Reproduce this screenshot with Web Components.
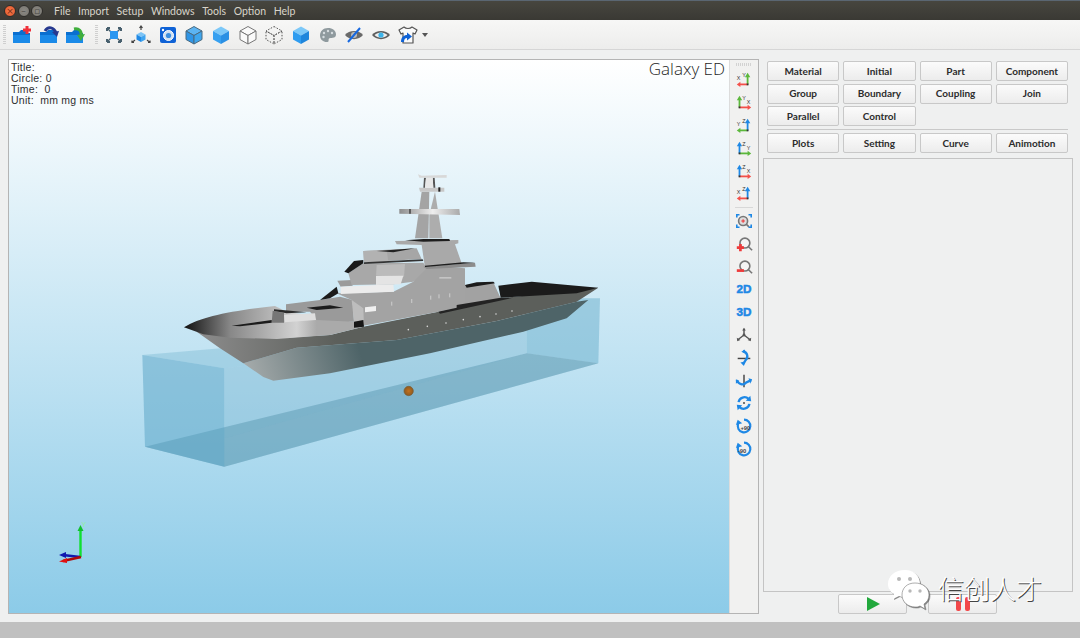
<!DOCTYPE html>
<html>
<head>
<meta charset="utf-8">
<style>
html, body { margin: 0; height: 638px; overflow: hidden; background: #eff0f0; }
</style>
</head>
<body>
<app-window>
    <title-bar></title-bar>
    <main-toolbar></main-toolbar>
    <work-area>
        <view-frame>
            <ship-view></ship-view>
            <side-toolbar></side-toolbar>
        </view-frame>
        <side-panel></side-panel>
    </work-area>
    <water-mark></water-mark>
</app-window>
<script>
// icon helpers, all drawn in a 20x20 box
const svg = (inner, size = 20) => `<svg width="${size}" height="${size}" viewBox="0 0 20 20">${inner}</svg>`

const folder = extra => svg(`
    <path d="M1 7 h6 l2 -2 h6 v3 h3 v10 H1z" fill="#0a6fd0"/>
    <path d="M1 10 h17 v8 H1z" fill="#1a8ae8"/>${extra}`)

const cube = (top, left, right, line, dash) => svg(`
    <g stroke="${line}" stroke-width="${line === 'none' ? 0 : 1}" stroke-linejoin="round" ${dash ? 'stroke-dasharray="1.5 1.5"' : ''}>
    <path d="M10 1.5 L18 6 L10 10.5 L2 6z" fill="${top}"/>
    <path d="M2 6 L10 10.5 V19 L2 14.5z" fill="${left}"/>
    <path d="M18 6 L10 10.5 V19 L18 14.5z" fill="${right}"/></g>`)

const vArrow = (x, col) => `<path d="M${x} 16 V7" stroke="${col}" stroke-width="2"/><path d="M${x - 3} 8 L${x} 3 L${x + 3} 8z" fill="${col}"/>`
const hArrow = (x1, x2, col) => {
    const d = x2 > x1 ? 1 : -1
    return `<path d="M${x1} 16 H${x2 - d * 3}" stroke="${col}" stroke-width="2"/><path d="M${x2 - d * 4} 13 L${x2} 16 L${x2 - d * 4} 19z" fill="${col}"/>`
}
const tiny = (x, y, t) => `<text x="${x}" y="${y}" font-family="Liberation Sans, sans-serif" font-size="6" fill="#333">${t}</text>`
const RED = '#f4504a', GREEN = '#5cb83c', BLUE = '#1e88e5'
// upright arrow on the right, flat one pointing left
const axisR = (vc, vl, hc, hl) => svg(vArrow(14, vc) + hArrow(14, 2, hc) + tiny(8, 8, vl) + tiny(2, 11, hl) + '<rect x="13" y="15" width="2" height="2" fill="#333"/>')
// upright arrow on the left, flat one pointing right
const axisL = (vc, vl, hc, hl) => svg(vArrow(5, vc) + hArrow(5, 18, hc) + tiny(8, 8, vl) + tiny(13, 12, hl) + '<rect x="4" y="15" width="2" height="2" fill="#333"/>')

const lens = (cx = 11, cy = 9) => `<circle cx="${cx}" cy="${cy}" r="5.5" fill="#f4f4f4" stroke="#777" stroke-width="1.8"/><path d="M${cx + 4} ${cy + 4} l4 4" stroke="#777" stroke-width="1.8"/>`
const spin = `<path d="M10 3 a7 7 0 1 1 -6.5 4.5" fill="none" stroke="${BLUE}" stroke-width="2.4"/><path d="M1 9 L3 3 L8 7z" fill="${BLUE}"/>`

const toolIcons = [
    svg(`<path d="M3 3 h3 M3 3 v3 M17 3 h-3 M17 3 v3 M3 17 h3 M3 17 v-3 M17 17 h-3 M17 17 v-3" stroke="#48606e" stroke-width="2" fill="none"/><path d="M3.5 3.5 l3 3 M16.5 3.5 l-3 3 M3.5 16.5 l3 -3 M16.5 16.5 l-3 -3" stroke="#48606e" stroke-width="1.4"/><rect x="6" y="6" width="8" height="8" fill="#2a96f0"/>`),
    svg(`<path d="M10 7 L14.5 9.5 L10 12 L5.5 9.5z" fill="#7cc4f6"/><path d="M5.5 9.5 L10 12 V17 L5.5 14.5z" fill="#1e88e5"/><path d="M14.5 9.5 L10 12 V17 L14.5 14.5z" fill="#3fa4f0"/><path d="M10 5 V1.5 M8.5 3 L10 1 L11.5 3" stroke="#444" stroke-width="1.2" fill="none"/><path d="M4 15 L1 17.5 M1 15.5 V17.5 H3 M16 15 L19 17.5 M19 15.5 V17.5 H17" stroke="#444" stroke-width="1.2" fill="none"/>`),
    svg(`<rect x="2" y="2" width="16" height="16" rx="2" fill="#0f62d6"/><circle cx="10.5" cy="10.5" r="5" fill="#cfe0f2" stroke="#fff" stroke-width="1"/><circle cx="10.5" cy="10.5" r="2.6" fill="#3d8fe0"/><circle cx="5" cy="5" r="1.2" fill="#fff"/>`),
    cube('#5cb4f2', '#2f95e6', '#3ea6ee', '#4a6a80'),
    cube('#7cc8f8', '#36a0f0', '#2a90e4', 'none'),
    cube('#fafafa', '#fafafa', '#fafafa', '#777'),
    cube('none', 'none', 'none', '#555', true),
    cube('#7cc8f8', '#2e9cf0', '#1f86dc', 'none'),
    svg(`<path d="M10 3 C5 3 2 6.5 2 10.5 C2 15 6 17.5 9.5 17 C11.5 16.5 10 14.5 11 13.5 C12 12.5 18 14 18 9.5 C18 5.5 14.5 3 10 3z" fill="#8f9a9e"/><circle cx="6" cy="8" r="1.2" fill="#d5dcdf"/><circle cx="10" cy="6" r="1.2" fill="#d5dcdf"/><circle cx="14" cy="8" r="1.2" fill="#d5dcdf"/><circle cx="5.5" cy="12" r="1.2" fill="#d5dcdf"/>`),
    svg(`<path d="M1 10 C5 4.5 15 4.5 19 10 C15 15.5 5 15.5 1 10z" fill="#6a6a6a"/><circle cx="10" cy="10" r="3" fill="#bbb"/><path d="M4 17 L16 3" stroke="#1668e0" stroke-width="2"/>`),
    svg(`<path d="M1 10 C5 4.5 15 4.5 19 10 C15 15.5 5 15.5 1 10z" fill="#5e5e5e"/><path d="M3.5 10 C7 6.5 13 6.5 16.5 10 C13 13.5 7 13.5 3.5 10z" fill="#eee"/><circle cx="10" cy="10" r="2.6" fill="#3cb4ea"/>`),
    svg(`<path d="M6 2 C8 4 12 4 14 2 L19 5 L17 9 L15 8 V18 H5 V8 L3 9 L1 5z" fill="#fafafa" stroke="#555" stroke-width="1.2" stroke-linejoin="round"/><path d="M3 17 C3 12 6 10 9 10 V7.5 L14 11.5 L9 15.5 V13 C7 13 6 14.5 6 17z" fill="#0f62d6"/>`)
]

const sideIcons = [
    axisR(GREEN, 'Y', RED, 'X'), axisL(GREEN, 'Y', RED, 'X'), axisR(BLUE, 'Z', GREEN, 'Y'),
    axisL(BLUE, 'Z', GREEN, 'Y'), axisL(BLUE, 'Z', RED, 'X'), axisR(BLUE, 'Z', RED, 'X'),
    null,
    svg(`<circle cx="9" cy="10" r="5" fill="#ddd" stroke="#777" stroke-width="1.8"/><path d="M7 10 h4 M9 8 v4" stroke="#e33" stroke-width="1.2"/><path d="M12.5 13.5 l3 3" stroke="#777" stroke-width="1.8"/><path d="M2 6 V3 H5 M15 3 h3 v3 M2 14 v3 h3 M15 17 h3 v-3" stroke="${BLUE}" stroke-width="1.8" fill="none"/>`),
    svg(lens() + `<path d="M2 14 h8 M6 10 v8" stroke="#ee3b3b" stroke-width="3"/>`),
    svg(lens() + `<path d="M2 14 h8" stroke="#ee3b3b" stroke-width="3"/>`),
    svg(`<text x="10" y="14.5" text-anchor="middle" font-family="Liberation Sans, sans-serif" font-weight="700" font-size="13" fill="${BLUE}" stroke="${BLUE}" stroke-width=".6">2D</text>`),
    svg(`<text x="10" y="14.5" text-anchor="middle" font-family="Liberation Sans, sans-serif" font-weight="700" font-size="13" fill="${BLUE}" stroke="${BLUE}" stroke-width=".6">3D</text>`),
    svg(`<path d="M10 3 V10 L3.5 15 M10 10 L16.5 15" stroke="#555" stroke-width="1.6" fill="none"/><path d="M8 5 L10 2 L12 5z M2 13 L2.5 17 L6 15.5z M18 13 L17.5 17 L14 15.5z" fill="#555"/><circle cx="10" cy="10" r="1.6" fill="#555"/>`),
    svg(`<path d="M3 10.5 H17" stroke="#444" stroke-width="1.6"/><path d="M9 2 C14 4 15 9 12 12 C11 14 10 15 9 17" fill="none" stroke="${BLUE}" stroke-width="2.6"/><path d="M6 15 L10 19 L11 14z M7 3 L11 0.5 L11 5z" fill="${BLUE}"/>`),
    svg(`<path d="M10 3 V17" stroke="#444" stroke-width="1.6"/><path d="M2 9 C4 14 9 15 12 12 C14 11 16 10 18 9" fill="none" stroke="${BLUE}" stroke-width="2.6"/><path d="M1 13 L1 8 L5 10z M15 7 L19 8 L17 13z" fill="${BLUE}"/>`),
    svg(`<path d="M4 9 A6.5 6.5 0 0 1 15 5.5" fill="none" stroke="${BLUE}" stroke-width="2.6"/><path d="M16 11 A6.5 6.5 0 0 1 5 14.5" fill="none" stroke="${BLUE}" stroke-width="2.6"/><path d="M12 7.5 L18 8 L17 2z M8 12.5 L2 12 L3 18z" fill="${BLUE}"/><circle cx="10" cy="10" r="1.2" fill="#555"/>`),
    svg(spin + `<text x="6" y="14.5" font-family="Liberation Sans, sans-serif" font-weight="700" font-size="6.5" fill="#444">+90</text>`),
    svg(spin + `<text x="3" y="14.5" font-family="Liberation Sans, sans-serif" font-weight="700" font-size="6.5" fill="#444">-90</text>`)
]

// a custom element from plain markup
const define = (name, markup) => customElements.define(name, class extends HTMLElement {
    constructor() {
        super()
        this.attachShadow({ mode: 'open' }).innerHTML = markup
    }
})

define('app-window', `<style>
    :host { display: flex; flex-direction: column; height: 638px; position: relative; background: #eff0f0; }
    ::slotted(work-area) { flex: 1; }
    #foot { height: 16px; background: #c0c0c0; }
</style><slot></slot><div id="foot"></div>`)

define('title-bar', `<style>
    :host { display: flex; align-items: center; height: 19px; flex: none; border-top: 1px solid #5a6672; background: linear-gradient(#47463f, #3a3934); }
    .dots { display: flex; gap: 1.5px; padding-left: 4px; width: 54px; box-sizing: border-box; }
    .dot { width: 10px; height: 10px; flex: none; border-radius: 50%; background: radial-gradient(#8c8a84, #77756f); border: 1px solid #2e2d2a; font: 9px/10px "DejaVu Sans", sans-serif; text-align: center; color: #4a4945; }
    .dot.close { background: radial-gradient(#f47a4e, #e2572a); color: #7a2a10; }
    nav { display: flex; gap: 7.6px; font: 10.5px "Lato", sans-serif; color: #d8d4ca; }
</style>
<div class="dots"><div class="dot close">×</div><div class="dot">–</div><div class="dot">▫</div></div>
<nav><span>File</span><span>Import</span><span>Setup</span><span>Windows</span><span>Tools</span><span>Option</span><span>Help</span></nav>`)

define('main-toolbar', `<style>
    :host { display: flex; align-items: center; height: 29px; flex: none; padding-left: 3px; border-bottom: 1px solid #d6d6d6; background: linear-gradient(#f7f7f6, #ededec); }
    .handle { width: 3px; height: 20px; margin-right: 2.7px; flex: none; background: repeating-linear-gradient(#cfcfcf 0 1px, transparent 1px 2px); }
    .handle.mid { margin-left: 6.5px; }
    .cell { width: 26.7px; flex: none; display: flex; justify-content: center; }
    svg { display: block; }
    .drop { width: 0; height: 0; margin-left: 1px; border: 3px solid transparent; border-top: 4px solid #555; border-bottom: 0; }
</style>
<div class="handle"></div>
<div class="cell">${folder(`<path d="M11 5 h8 M15 1 v8" stroke="#f0303a" stroke-width="3"/>`)}</div>
<div class="cell">${folder(`<path d="M6 6 C9 1 15 2 17 8" fill="none" stroke="#27398f" stroke-width="3"/><path d="M13 7 L20 6 L18 12z" fill="#27398f"/>`)}</div>
<div class="cell">${folder(`<path d="M9 4 C14 3 17 6 16 11" fill="none" stroke="#3fae3c" stroke-width="3"/><path d="M12 10 L20 9 L16 16z" fill="#3fae3c"/>`)}</div>
<div class="handle mid"></div>
${toolIcons.map(i => `<div class="cell">${i}</div>`).join('')}
<div class="drop"></div>`)

define('work-area', `<style>
    :host { display: flex; align-items: stretch; padding: 9px 7px 8px 8px; min-height: 0; }
</style><slot></slot>`)

define('view-frame', `<style>
    :host { display: flex; width: 751px; flex: none; box-sizing: border-box; border: 1px solid #b4b4b4; }
</style><slot></slot>`)

// everything in the ship group uses a 3x coordinate system of the model area
define('ship-view', `<style>
    :host { display: block; width: 720px; flex: none; position: relative; background: linear-gradient(#ffffff, #8ccbe8); font: 10.5px/11px "Liberation Sans", sans-serif; letter-spacing: .25px; color: #2e2e2e; }
    svg { display: block; }
    #info { position: absolute; left: 2px; top: 2px; }
    #brand { position: absolute; right: 4px; top: 0; font: 300 17px/18px "Open Sans", sans-serif; letter-spacing: 0; color: #1e1e1e; }
</style>
<svg width="720" height="553" viewBox="9 60 720 553">
    <defs>
        <linearGradient id="bow" x1="162" x2="560" y1="0" y2="0" gradientUnits="userSpaceOnUse">
            <stop offset="0" stop-color="#111"/><stop offset=".35" stop-color="#888"/><stop offset=".85" stop-color="#d2d2d2"/><stop offset="1" stop-color="#aaa"/>
        </linearGradient>
        <linearGradient id="band" x1="220" x2="620" y1="0" y2="0" gradientUnits="userSpaceOnUse">
            <stop offset="0" stop-color="#8a8a8a"/><stop offset="1" stop-color="#5c5f5b"/>
        </linearGradient>
        <linearGradient id="low" x1="340" x2="680" y1="640" y2="530" gradientUnits="userSpaceOnUse">
            <stop offset="0" stop-color="#a9aeae"/><stop offset="1" stop-color="#4e6468"/>
        </linearGradient>
        <linearGradient id="bar" x1="808" x2="990" y1="0" y2="0" gradientUnits="userSpaceOnUse">
            <stop offset="0" stop-color="#8e8e8e"/><stop offset=".55" stop-color="#eee"/><stop offset="1" stop-color="#aaa"/>
        </linearGradient>
        <radialGradient id="ball"><stop offset="0" stop-color="#c4701c"/><stop offset="1" stop-color="#8c5a20"/></radialGradient>
    </defs>
    <g transform="translate(130 165) scale(.33333)">
        <!-- water box, back faces -->
        <path d="M37 570 L283 610 L1190 500 L1190 470z" fill="#5fa8c8" fill-opacity=".3"/>
        <path d="M1190 400 L1410 400 L1405 595 L1190 565z" fill="#5fa8c8" fill-opacity=".45"/>
        <path d="M45 845 L283 905 L1405 595 L1190 565z" fill="#3f7f95" fill-opacity=".42"/>
        <!-- water box, front left face -->
        <path d="M37 570 L283 610 L283 905 L45 845z" fill="#5fa8c8" fill-opacity=".55"/>
        <path d="M283 610 L1190 500 L1190 565 L283 820z" fill="#6fb0cc" fill-opacity=".35"/>
        <path d="M283 820 L1190 565 L1405 595 L283 905z" fill="#6fb0cc" fill-opacity=".2"/>
        <!-- hull -->
        <path d="M340 595 L500 548 L800 525 L1100 468 L1340 410 L1375 405 L1310 460 L1180 500 L900 565 L600 625 L430 647 L400 636z" fill="url(#low)"/>
        <path d="M200 500 L300 515 L440 520 L600 510 L700 485 L925 440 L980 430 L1110 400 L1405 368 L1340 410 L1100 468 L800 525 L500 548 L340 595 L270 550z" fill="url(#band)"/>
        <path d="M162 487 C215 455 300 438 435 423 L470 440 L670 470 L700 485 L600 510 L440 522 L300 518 L220 508z" fill="url(#bow)"/>
        <!-- deck gear forward -->
        <path d="M468 418 L570 405 L630 395 L668 405 L672 470 L560 465 L540 440 L468 440z" fill="#9a9a9a"/>
        <path d="M530 428 L600 421 L640 428 L560 435z" fill="#1c1c1c"/>
        <path d="M428 437 L462 444 L462 473 L425 473z" fill="#767676"/>
        <path d="M462 450 L555 445 L558 465 L465 472z" fill="#dedede"/>
        <path d="M305 482 L425 465 L425 473 L330 484z" fill="#1c1c1c"/>
        <path d="M432 433 L530 442 L470 445 L432 438z" fill="#2a2a2a"/>
        <!-- main block -->
        <path d="M620 385 L790 380 L850 350 L880 300 L1005 310 L1005 420 L980 430 L925 440 L700 482 L665 405z" fill="#a3a3a3"/>
        <path d="M665 405 L700 430 L702 482 L672 470z" fill="#bdbdbd"/>
        <path d="M570 405 L620 365 L625 385 L600 400z" fill="#1b1b1b"/>
        <path d="M622 347 L665 345 L668 362 L632 365z" fill="#9b9b9b"/>
        <path d="M632 365 L790 358 L792 380 L632 387z" fill="#ececec"/>
        <path d="M705 427 L738 423 L738 438 L705 442z" fill="#f0f0f0"/>
        <path d="M672 470 L700 465 L702 485 L672 488z" fill="#161616"/>
        <!-- bridge -->
        <path d="M655 325 L700 295 L880 293 L890 310 L850 350 L790 358 L665 360z" fill="#a8a8a8"/>
        <path d="M740 300 L825 297 L822 335 L738 332z" fill="#bbb"/>
        <path d="M738 333 L820 332 L812 358 L738 360z" fill="#e4e4e4"/>
        <path d="M643 320 L672 288 L700 285 L700 295 L655 325z" fill="#1a1a1a"/>
        <path d="M700 258 L860 250 L875 282 L702 292z" fill="#a6a6a6"/>
        <path d="M700 258 L770 255 L775 290 L702 292z" fill="#b2b2b2"/>
        <path d="M740 258 L855 250 L790 262z" fill="#222"/>
        <path d="M702 292 L878 283 L880 288 L702 297z" fill="#333"/>
        <!-- tower -->
        <path d="M795 228 L985 225 L985 235 L975 238 L995 295 L885 308 L875 240 L800 238z" fill="#a9a9a9"/>
        <path d="M825 226 L880 222 L958 222 L960 228 L880 230z" fill="#1e1e1e"/>
        <path d="M880 305 L1035 293 L1037 305 L890 312z" fill="#8c8c8c"/>
        <path d="M885 306 L1000 296 L1035 293 L1000 292 L885 302z" fill="#1e1e1e"/>
        <!-- aft cabin and stern deck -->
        <path d="M1005 360 L1090 352 L1110 395 L1112 400 L980 430 L1005 415z" fill="#a2a2a2"/>
        <path d="M1005 360 L1040 352 L1090 350 L1095 355 L1010 368z" fill="#1b1b1b"/>
        <path d="M1105 362 L1205 350 L1405 368 L1340 385 L1112 398z" fill="#1b1b1b"/>
        <path d="M925 440 L980 428 L980 420 L1112 398 L1150 398 L930 446z" fill="#232323"/>
        <!-- mast -->
        <path d="M855 220 L875 80 L898 80 L895 220z" fill="#a4a4a4"/>
        <path d="M898 220 L898 150 L915 80 L937 220z" fill="#adadad"/>
        <path d="M808 132 L988 132 L990 150 L808 146z" fill="url(#bar)"/>
        <path d="M838 132 h4 v14 h-4z" fill="#333"/>
        <path d="M867 68 H943 V80 H870z" fill="#c8c8c8"/>
        <path d="M882 38 H888 L885 68 H880z M908 38 H914 L916 68 H910z" fill="#555"/>
        <path d="M888 38 H908 L910 68 H885z" fill="#e8e8e8"/>
        <path d="M925 67 h6 v13 h-6z" fill="#222"/>
        <path d="M864 28 L875 32 L950 30 L950 38 L868 38z" fill="#d8d8d8"/>
        <!-- ports -->
        <g fill="#d8d8d8">
            <circle cx="835" cy="494" r="2.4"/><circle cx="892" cy="484" r="2.4"/><circle cx="948" cy="474" r="2.4"/><circle cx="1000" cy="464" r="2.4"/><circle cx="1050" cy="455" r="2.4"/><circle cx="1098" cy="447" r="2.4"/><circle cx="1146" cy="438" r="2.4"/>
        </g>
        <g fill="#c4c4c4">
            <rect x="783" y="410" width="4" height="12"/><rect x="843" y="402" width="4" height="12"/><rect x="900" y="392" width="4" height="12"/><rect x="925" y="388" width="4" height="12"/><rect x="957" y="385" width="4" height="12"/><rect x="928" y="336" width="36" height="5"/>
        </g>
        <circle cx="836" cy="678" r="14" fill="url(#ball)" stroke="#7a5a34" stroke-width="2"/>
    </g>
    <!-- axis triad -->
    <path d="M80.5 557 V530" stroke="#10e030" stroke-width="2.4"/>
    <path d="M77.5 531 L80.5 525 L83.5 531z" fill="#10c030"/>
    <text x="81.5" y="527" font-family="Liberation Sans, sans-serif" font-size="7" fill="#8ff0a0">Y</text>
    <path d="M80 557 L63 555" stroke="#1018b0" stroke-width="2.4"/>
    <path d="M66 552 L59 555 L66 558z" fill="#1018b0"/>
    <path d="M81 557 L63 561" stroke="#b00808" stroke-width="2.6"/>
    <path d="M67 558 L59 561.5 L67 563z" fill="#e01010"/>
</svg>
<div id="info"><div>Title:</div><div>Circle: 0</div><div>Time:&nbsp; 0</div><div>Unit:&nbsp; mm mg ms</div></div>
<div id="brand">Galaxy ED</div>`)

define('side-toolbar', `<style>
    :host { display: flex; flex-direction: column; align-items: center; flex: 1; background: #f1f1f0; border-left: 1px solid #dcdcdc; padding-top: 3px; box-sizing: border-box; }
    .handle { width: 16px; height: 3px; margin-bottom: 2px; background: repeating-linear-gradient(90deg, #d2d2d2 0 1px, transparent 1px 2px); }
    .cell { height: 22.8px; display: flex; align-items: center; }
    .rule { width: 18px; height: 1px; margin: 2px 0 1.8px; background: #d8d8d8; }
    svg { display: block; width: 18px; height: 18px; }
</style>
<div class="handle"></div>
${sideIcons.map(i => i ? `<div class="cell">${i}</div>` : '<div class="rule"></div>').join('')}`)

define('ui-button', `<style>
    :host { display: flex; align-items: center; justify-content: center; height: 20px; box-sizing: border-box; border: 1px solid #c8c8c8; border-radius: 2px; background: linear-gradient(#fbfbfb, #ececec); font: 700 10px/16px "Lato", sans-serif; padding-bottom: 1px; color: #2c2c2c; }
</style><slot></slot>`)

define('side-panel', `<style>
    :host { display: flex; flex-direction: column; flex: 1; margin-left: 4px; padding-top: 2px; min-width: 0; }
    .grid { display: grid; grid-template-columns: repeat(4, 1fr); gap: 2.6px 4px; padding: 0 5px 0 4px; }
    .rule { height: 1px; margin: 3px 5px 3px 4px; background: #c9c9c9; }
    .box { flex: 1; margin-top: 5px; border: 1px solid #c4c4c4; background: #eff0f0; }
    .run { display: flex; gap: 21px; padding: 2px 0 0 75px; }
    .run ui-button { width: 69px; }
</style>
<div class="grid">
    <ui-button>Material</ui-button><ui-button>Initial</ui-button><ui-button>Part</ui-button><ui-button>Component</ui-button>
    <ui-button>Group</ui-button><ui-button>Boundary</ui-button><ui-button>Coupling</ui-button><ui-button>Join</ui-button>
    <ui-button>Parallel</ui-button><ui-button>Control</ui-button>
</div>
<div class="rule"></div>
<div class="grid">
    <ui-button>Plots</ui-button><ui-button>Setting</ui-button><ui-button>Curve</ui-button><ui-button>Animotion</ui-button>
</div>
<div class="box"></div>
<div class="run">
    <ui-button><svg width="14" height="14" viewBox="0 0 14 14"><path d="M1 0 L14 7 L1 14z" fill="#22a83c"/></svg></ui-button>
    <ui-button><svg width="16" height="14" viewBox="0 0 16 14"><rect x="1" y="0" width="5" height="14" rx="2" fill="#f2484a"/><rect x="10" y="0" width="5" height="14" rx="2" fill="#f2484a"/></svg></ui-button>
</div>`)

define('water-mark', `<style>
    :host { position: absolute; left: 886px; top: 568px; display: flex; align-items: flex-start; gap: 6px; }
    svg { display: block; filter: drop-shadow(1px 1px 0 rgba(60,60,60,.6)); }
    span { font: 300 26px/30px "Noto Sans CJK SC", sans-serif; color: #fff; text-shadow: 1px 1px 0 #444; margin-top: 5px; }
</style>
<svg width="46" height="46" viewBox="0 0 46 46">
    <path d="M19 2 C9 2 2 8 2 16 C2 20 4 24 8 26 L7 31 L13 28 C15 29 17 29 19 29 C29 29 34 23 34 16 C34 8 28 2 19 2z" fill="#fff"/>
    <circle cx="13" cy="11" r="2" fill="#b8b8b8"/><circle cx="24" cy="11" r="2" fill="#b8b8b8"/>
    <path d="M29 15 C21 15 16 20 16 27 C16 34 22 39 29 39 C31 39 32 39 34 38 L39 41 L38 36 C41 34 43 31 43 27 C43 20 37 15 29 15z" fill="#fff" stroke="#777" stroke-width=".6"/>
    <circle cx="24" cy="23" r="1.7" fill="#b8b8b8"/><circle cx="34" cy="23" r="1.7" fill="#b8b8b8"/>
</svg>
<span>信创人才</span>`)
</script>
</body>
</html>
